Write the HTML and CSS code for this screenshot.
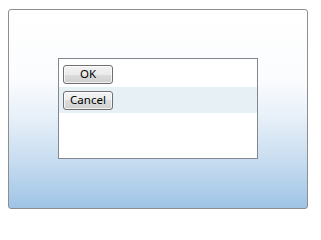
FILE: index.html
```html
<!DOCTYPE html>
<html>
<head>
<meta charset="utf-8">
<link rel="stylesheet" href="styles.css">
</head>
<body>
<div class="frame">
  <div class="list">
    <div class="row"><button class="btn">OK</button></div>
    <div class="row sel"><button class="btn">Cancel</button></div>
  </div>
</div>
</body>
</html>
```
FILE: styles.css
```css
html, body {
  margin: 0;
  padding: 0;
  background: #ffffff;
}
.frame {
  box-sizing: border-box;
  margin: 9px 0 0 8px;
  width: 300px;
  height: 200px;
  border: 1px solid #8c8e90;
  border-radius: 3px;
  padding: 48px 0 0 49px;
  background: linear-gradient(#ffffff 0%, #fbfcfe 35%, #e6eff8 55%, #c4dbef 78%, #9fc4e6 100%);
}
.list {
  box-sizing: border-box;
  width: 200px;
  height: 101px;
  border: 1px solid #828790;
  background: #ffffff;
  padding-top: 2px;
}
.row {
  height: 26px;
  display: flex;
  align-items: center;
  padding-left: 4px;
}
.row.sel {
  background: #e7f0f5;
}
.btn {
  box-sizing: border-box;
  width: 50px;
  height: 19px;
  margin: 0;
  padding: 0;
  border: 1px solid #707070;
  border-radius: 3px;
  background: linear-gradient(#f3f3f3 0%, #ebebeb 50%, #dddddd 50%, #cfcfcf 100%);
  box-shadow: inset 0 0 0 1px rgba(255,255,255,0.7);
  font-family: "Noto Sans", "DejaVu Sans", sans-serif;
  font-size: 11.5px;
  line-height: 16px;
  color: #000000;
  text-align: center;
}
```
